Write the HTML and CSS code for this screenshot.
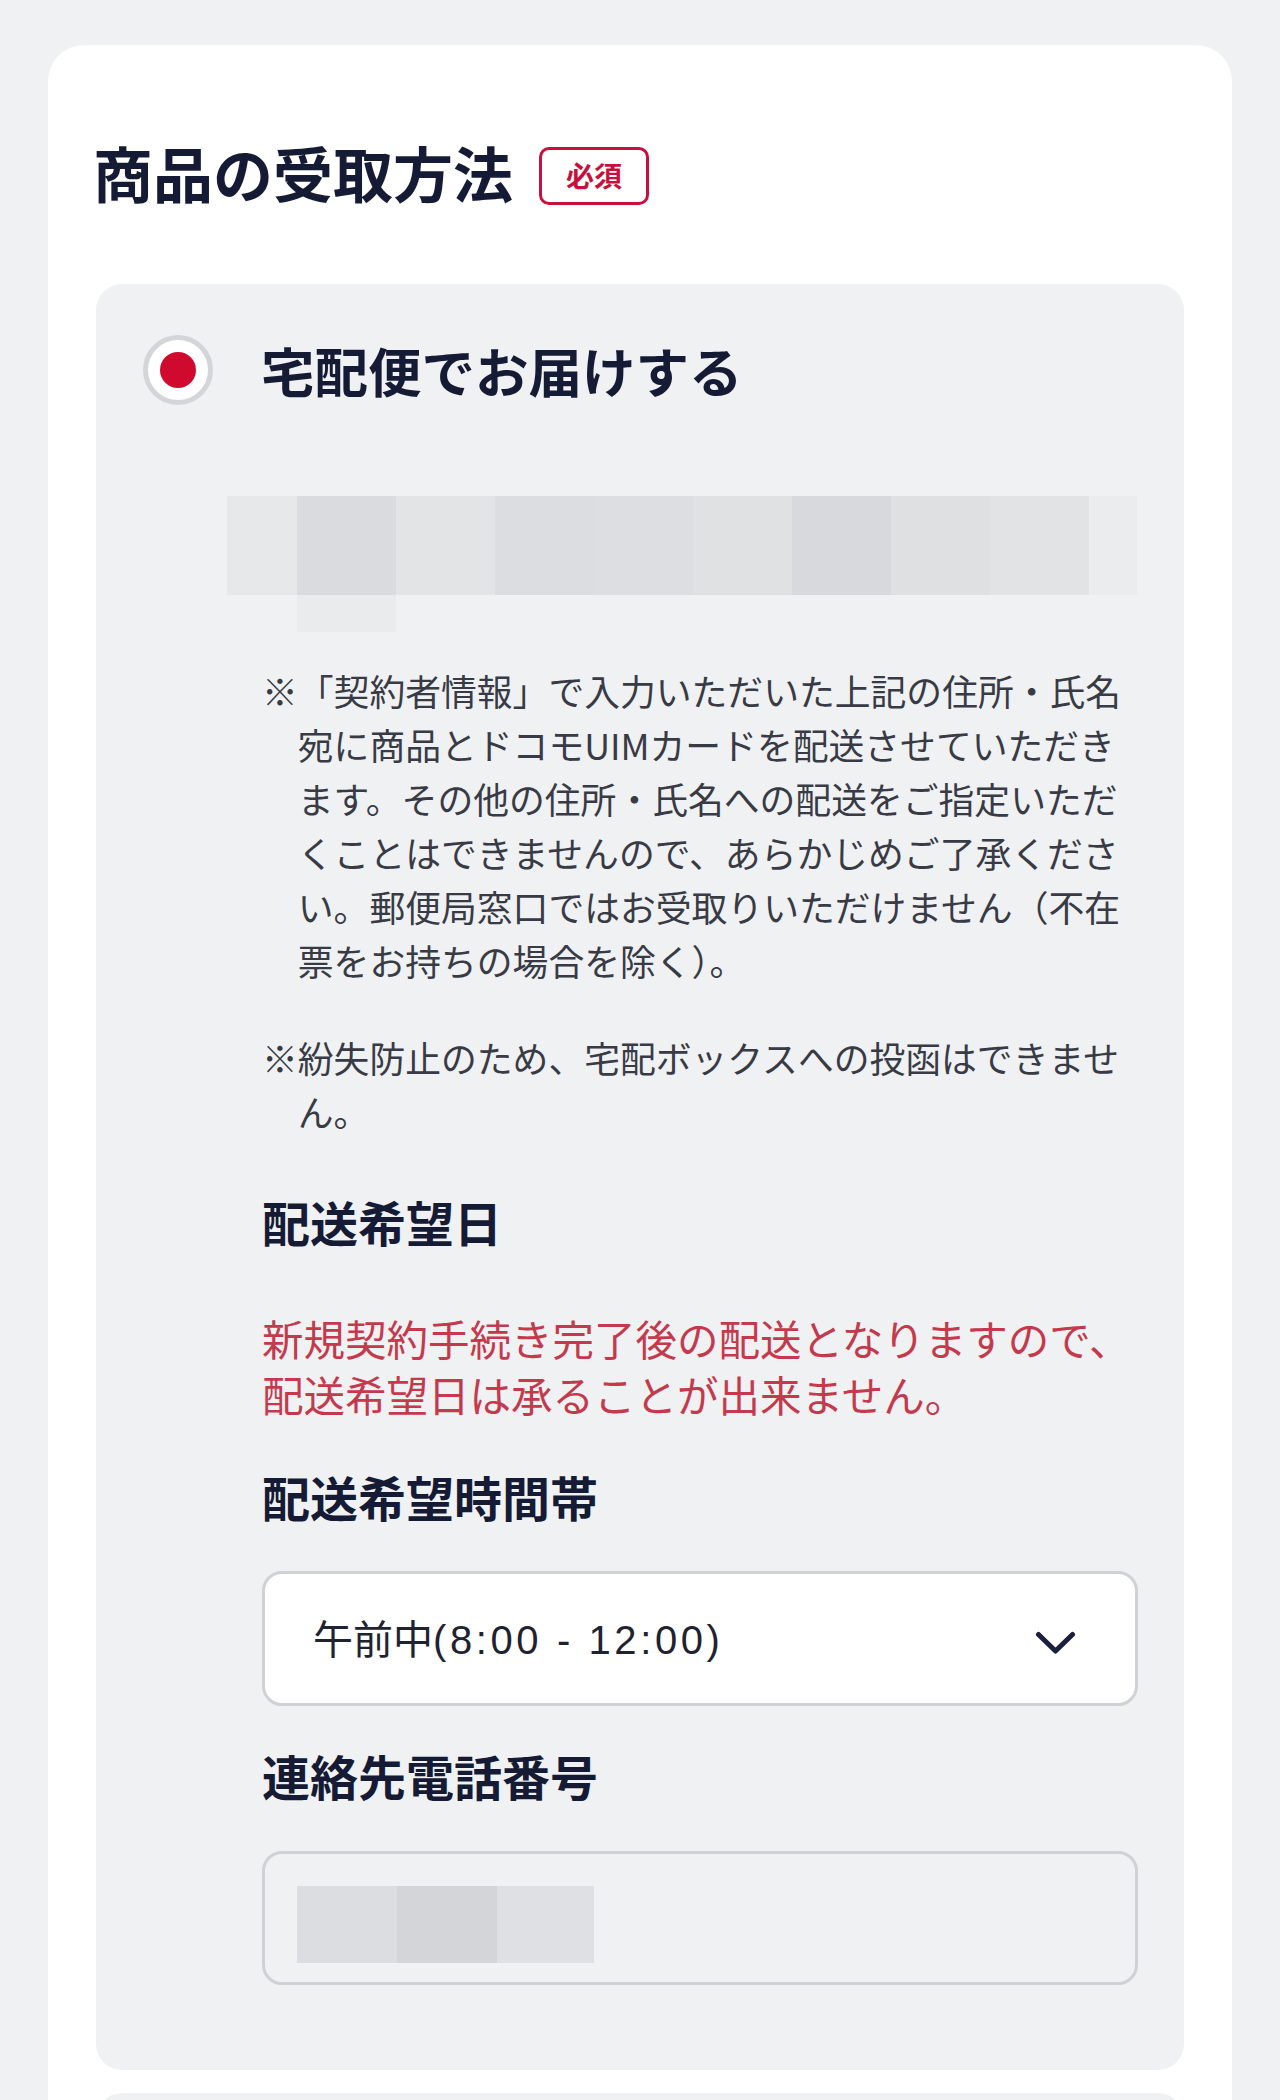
FILE: index.html
```html
<!DOCTYPE html>
<html lang="ja">
<head>
<meta charset="utf-8">
<title>商品の受取方法</title>
<link rel="stylesheet" href="styles.css">
</head>
<body>
<div class="card">
  <div class="card-head">
    <h2 class="card-title">商品の受取方法</h2>
    <span class="badge">必須</span>
  </div>

  <div class="option option-selected">
    <div class="option-row">
      <span class="radio"><span class="radio-dot"></span></span>
      <span class="option-label">宅配便でお届けする</span>
    </div>

    <div class="option-body">
      <div class="blur">
        <span class="px px0"></span><span class="px px1"></span><span class="px px2"></span><span class="px px3"></span><span class="px px4"></span><span class="px px5"></span><span class="px px6"></span><span class="px px7"></span><span class="px px8"></span><span class="px px9"></span>
        <span class="px px-ext"></span>
      </div>

      <p class="note">※「契約者情報」で入力いただいた上記の住所・氏名<br>宛に商品とドコモUIMカードを配送させていただき<br>ます。その他の住所・氏名への配送をご指定いただ<br>くことはできませんので、あらかじめご了承くださ<br>い。郵便局窓口ではお受取りいただけません（不在<br>票をお持ちの場合を除く）。</p>
      <p class="note note-second">※紛失防止のため、宅配ボックスへの投函はできませ<br>ん。</p>

      <h3 class="field-title field-date">配送希望日</h3>
      <p class="warn">新規契約手続き完了後の配送となりますので、<br>配送希望日は承ることが出来ません。</p>

      <h3 class="field-title field-time">配送希望時間帯</h3>
      <div class="select">
        <span class="select-text">午前中<span class="select-latin">(8:00 - 12:00)</span></span>
        <svg class="chevron" width="41" height="24" viewBox="0 0 41 24" aria-hidden="true"><polyline points="3.5,3.5 20.5,20 37.5,3.5" fill="none" stroke="#1b1f3b" stroke-width="5" stroke-linecap="round" stroke-linejoin="round"/></svg>
      </div>

      <h3 class="field-title field-tel">連絡先電話番号</h3>
      <div class="input">
        <span class="tel-blur"><span class="tp tp0"></span><span class="tp tp1"></span><span class="tp tp2"></span></span>
      </div>
    </div>
  </div>

  <div class="option option-next"></div>
</div>
</body>
</html>
```

FILE: styles.css
```css
* { box-sizing: border-box; }

html, body {
  margin: 0;
  padding: 0;
  background: #f0f1f3;
}

body {
  font-family: "Noto Sans CJK JP", "Noto Sans", sans-serif;
  color: #161b35;
}

.card {
  margin: 45px 48px 0;
  background: #ffffff;
  border-radius: 36px 36px 0 0;
  padding: 97px 48px 0;
  min-height: 2100px;
}

.card-head {
  display: flex;
  align-items: center;
  gap: 26px;
}

.card-title {
  margin: 0 0 0 -3px;
  font-size: 60px;
  line-height: 60px;
  font-weight: 700;
  padding-bottom: 8px;
  color: #161b35;
}

.badge {
  display: flex;
  align-items: center;
  justify-content: center;
  width: 110px;
  height: 58px;
  border: 3px solid #c8103c;
  border-radius: 10px;
  color: #c8103c;
  font-size: 28px;
  font-weight: 700;
  line-height: 1;
  padding-bottom: 2px;
}

.option {
  background: #f0f1f3;
  border-radius: 26px;
}

.option-selected {
  margin-top: 74px;
  padding: 51px 46px 85px 47px;
}

.option-next {
  margin-top: 23px;
  height: 60px;
}

.option-row {
  display: flex;
  align-items: center;
  gap: 48px;
}

.radio {
  width: 70px;
  height: 70px;
  border-radius: 50%;
  border: 5px solid #d3d5d9;
  background: #ffffff;
  display: flex;
  align-items: center;
  justify-content: center;
  flex-shrink: 0;
}

.radio-dot {
  width: 36px;
  height: 36px;
  border-radius: 50%;
  background: #cf0a2e;
}

.option-label {
  font-size: 53.5px;
  line-height: 70px;
  font-weight: 700;
  color: #161b35;
}

.option-body {
  padding-left: 119px;
}

.blur {
  margin-top: 91px;
  margin-left: -35px;
  display: grid;
  grid-template-columns: 70px repeat(8, 99px) 48px;
  grid-template-rows: 99px 37px;
}

.px { display: block; }
.px0 { background: #e7e8ea; }
.px1 { background: #dadbde; }
.px2 { background: #e3e4e6; }
.px3 { background: #dcdde0; }
.px4 { background: #dddee1; }
.px5 { background: #e0e1e3; }
.px6 { background: #d8d9dc; }
.px7 { background: #dfe0e2; }
.px8 { background: #e2e3e5; }
.px9 { background: #ebeced; }
.px-ext {
  grid-column: 2;
  grid-row: 2;
  background: #eaebed;
}

.note {
  margin: 31px 0 0;
  font-size: 35.8px;
  line-height: 54px;
  padding-left: 1em;
  text-indent: -1em;
  color: #383b45;
  white-space: nowrap;
}

.note-second {
  margin-top: 43px;
}

.field-title {
  margin: 0;
  font-size: 48px;
  line-height: 67px;
  font-weight: 700;
  color: #161b35;
}

.field-date { margin-top: 50px; }
.field-time { margin-top: 41px; }
.field-tel { margin-top: 36px; }

.warn {
  margin: 55px 0 0;
  font-size: 41.5px;
  line-height: 56px;
  color: #c43a4c;
  white-space: nowrap;
}

.select {
  margin-top: 41px;
  height: 135px;
  background: #ffffff;
  border: 3px solid #cfd1d5;
  border-radius: 20px;
  display: flex;
  align-items: center;
  justify-content: space-between;
  padding: 0 59px 0 48px;
}

.select-text {
  font-size: 40px;
  line-height: 1;
  color: #1f2230;
}

.select-latin {
  font-family: "Liberation Sans", "Noto Sans", sans-serif;
  letter-spacing: 3.6px;
}

.chevron {
  display: block;
  margin-top: 9px;
}

.input {
  margin-top: 42px;
  height: 134px;
  border: 3px solid #cfd1d5;
  border-radius: 20px;
  padding: 32px 0 0 32px;
}

.tel-blur {
  display: flex;
  height: 77px;
}

.tp { display: block; width: 100px; height: 77px; }
.tp0 { background: #dcdde0; }
.tp1 { background: #d4d5d9; }
.tp2 { background: #dfe0e3; width: 97px; }
```
